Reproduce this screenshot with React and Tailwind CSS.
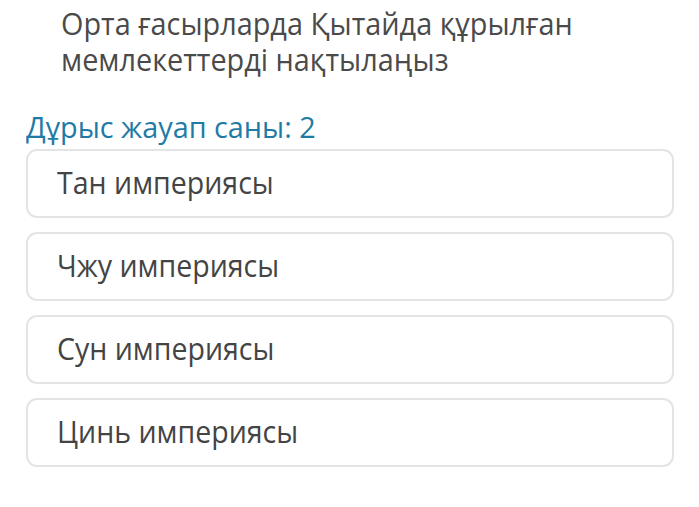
export default function App() {
    const options = ['Тан империясы', 'Чжу империясы', 'Сун империясы', 'Цинь империясы']

    return (
        <div className="w-[699px] h-[507px] bg-white overflow-hidden font-['Open_Sans',sans-serif]">
            <div className="pl-[61px] pt-[5px] text-[31px] leading-[36px] text-[#4a4a4a]">
                <p className="origin-left scale-x-[0.93]">Орта ғасырларда Қытайда құрылған</p>
                <p className="origin-left scale-x-[0.93]">мемлекеттерді нақтылаңыз</p>
            </div>

            <div className="pl-[26px] mt-[32px] text-[30px] leading-[36px] text-[#1f7ba6]">
                <p className="origin-left scale-x-[0.96]">Дұрыс жауап саны: 2</p>
            </div>

            <div className="mt-[4px] ml-[26px] w-[648px] flex flex-col gap-[14px]">
                {options.map((opt) => (
                    <div
                        key={opt}
                        className="h-[69px] border-2 border-[#e3e4e4] rounded-[11px] flex items-center pl-[29px] pb-[2px] text-[31px] text-[#444]"
                    >
                        <span className="origin-left scale-x-[0.92]">{opt}</span>
                    </div>
                ))}
            </div>
        </div>
    )
}
